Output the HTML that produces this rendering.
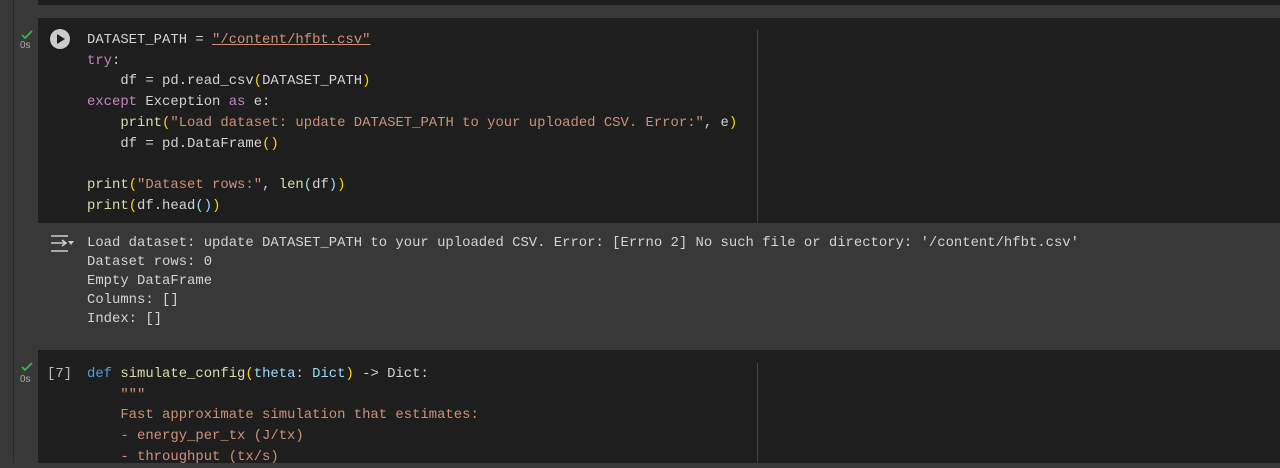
<!DOCTYPE html>
<html><head><style>
body{margin:0;width:1280px;height:463px;background:#383838;position:relative;overflow:hidden;font-family:"Liberation Mono",monospace;font-size:13.9px;}
.abs{position:absolute}
.cell{position:absolute;left:38px;right:0;background:#1e1e1e}
.vl{position:absolute;left:757px;width:1px;background:#444}
pre{margin:0;font-family:"Liberation Mono",monospace;font-size:13.9px;line-height:20.7px;color:#d4d4d4;position:absolute}
.k{color:#c586c0}.f{color:#dcdcaa}.s{color:#ce9178}.b{color:#ffd700}.p{color:#9cdcfe}.d{color:#569cd6}
.os{position:absolute;left:20px;color:#aaa;font-family:"Liberation Sans",sans-serif;font-size:10px}
</style></head><body>
<div class="abs" style="left:13px;top:0;width:1px;height:463px;background:#2a2a2a"></div>
<div class="cell" style="top:0;height:5px"></div>
<div class="cell" style="top:18px;height:205px"></div>
<div class="vl" style="top:30px;height:193px"></div>
<svg class="abs" style="left:20px;top:30px" width="14" height="10"><path d="M2 5l3 3 7-7" stroke="#3fb950" stroke-width="1.6" fill="none"/></svg>
<div class="os" style="top:40px">0s</div>
<svg class="abs" style="left:49px;top:28px" width="22" height="22"><circle cx="11" cy="11" r="10" fill="#ccc"/><path d="M8 6v10l8-5z" fill="#1e1e1e"/></svg>
<pre style="left:87px;top:30px">DATASET_PATH = <span class="s" style="text-decoration:underline">"/content/hfbt.csv"</span>
<span class="k">try</span>:
    df = pd.read_csv<span class="b">(</span>DATASET_PATH<span class="b">)</span>
<span class="k">except</span> Exception <span class="k">as</span> e:
    <span class="f">print</span><span class="b">(</span><span class="s">"Load dataset: update DATASET_PATH to your uploaded CSV. Error:"</span>, e<span class="b">)</span>
    df = pd.DataFrame<span class="b">()</span>

<span class="f">print</span><span class="b">(</span><span class="s">"Dataset rows:"</span>, <span class="f">len</span><span class="p">(</span>df<span class="p">)</span><span class="b">)</span>
<span class="f">print</span><span class="b">(</span>df.head<span class="p">()</span><span class="b">)</span></pre>
<svg class="abs" style="left:49px;top:234px" width="26" height="20"><path d="M2 2h17M2 9h15M13 6l4 3-4 3M2 17h17" stroke="#ccc" stroke-width="1.6" fill="none"/><path d="M19 7h6l-3 4z" fill="#ccc"/></svg>
<pre style="left:87px;top:234px;line-height:19px">Load dataset: update DATASET_PATH to your uploaded CSV. Error: [Errno 2] No such file or directory: '/content/hfbt.csv'
Dataset rows: 0
Empty DataFrame
Columns: []
Index: []</pre>
<div class="cell" style="top:350px;height:113px"></div>
<div class="vl" style="top:363px;height:100px"></div>
<svg class="abs" style="left:20px;top:362px" width="14" height="10"><path d="M2 5l3 3 7-7" stroke="#3fb950" stroke-width="1.6" fill="none"/></svg>
<div class="os" style="top:374px">0s</div>
<pre style="left:47px;top:364px;color:#bbb">[7]</pre>
<pre style="left:87px;top:364px"><span class="d">def</span> <span class="f">simulate_config</span><span class="b">(</span><span class="p">theta</span>: <span class="p">Dict</span><span class="b">)</span> -&gt; Dict:
    <span class="s">"""</span>
<span class="s">    Fast approximate simulation that estimates:
    - energy_per_tx (J/tx)
    - throughput (tx/s)</span></pre>
</body></html>
